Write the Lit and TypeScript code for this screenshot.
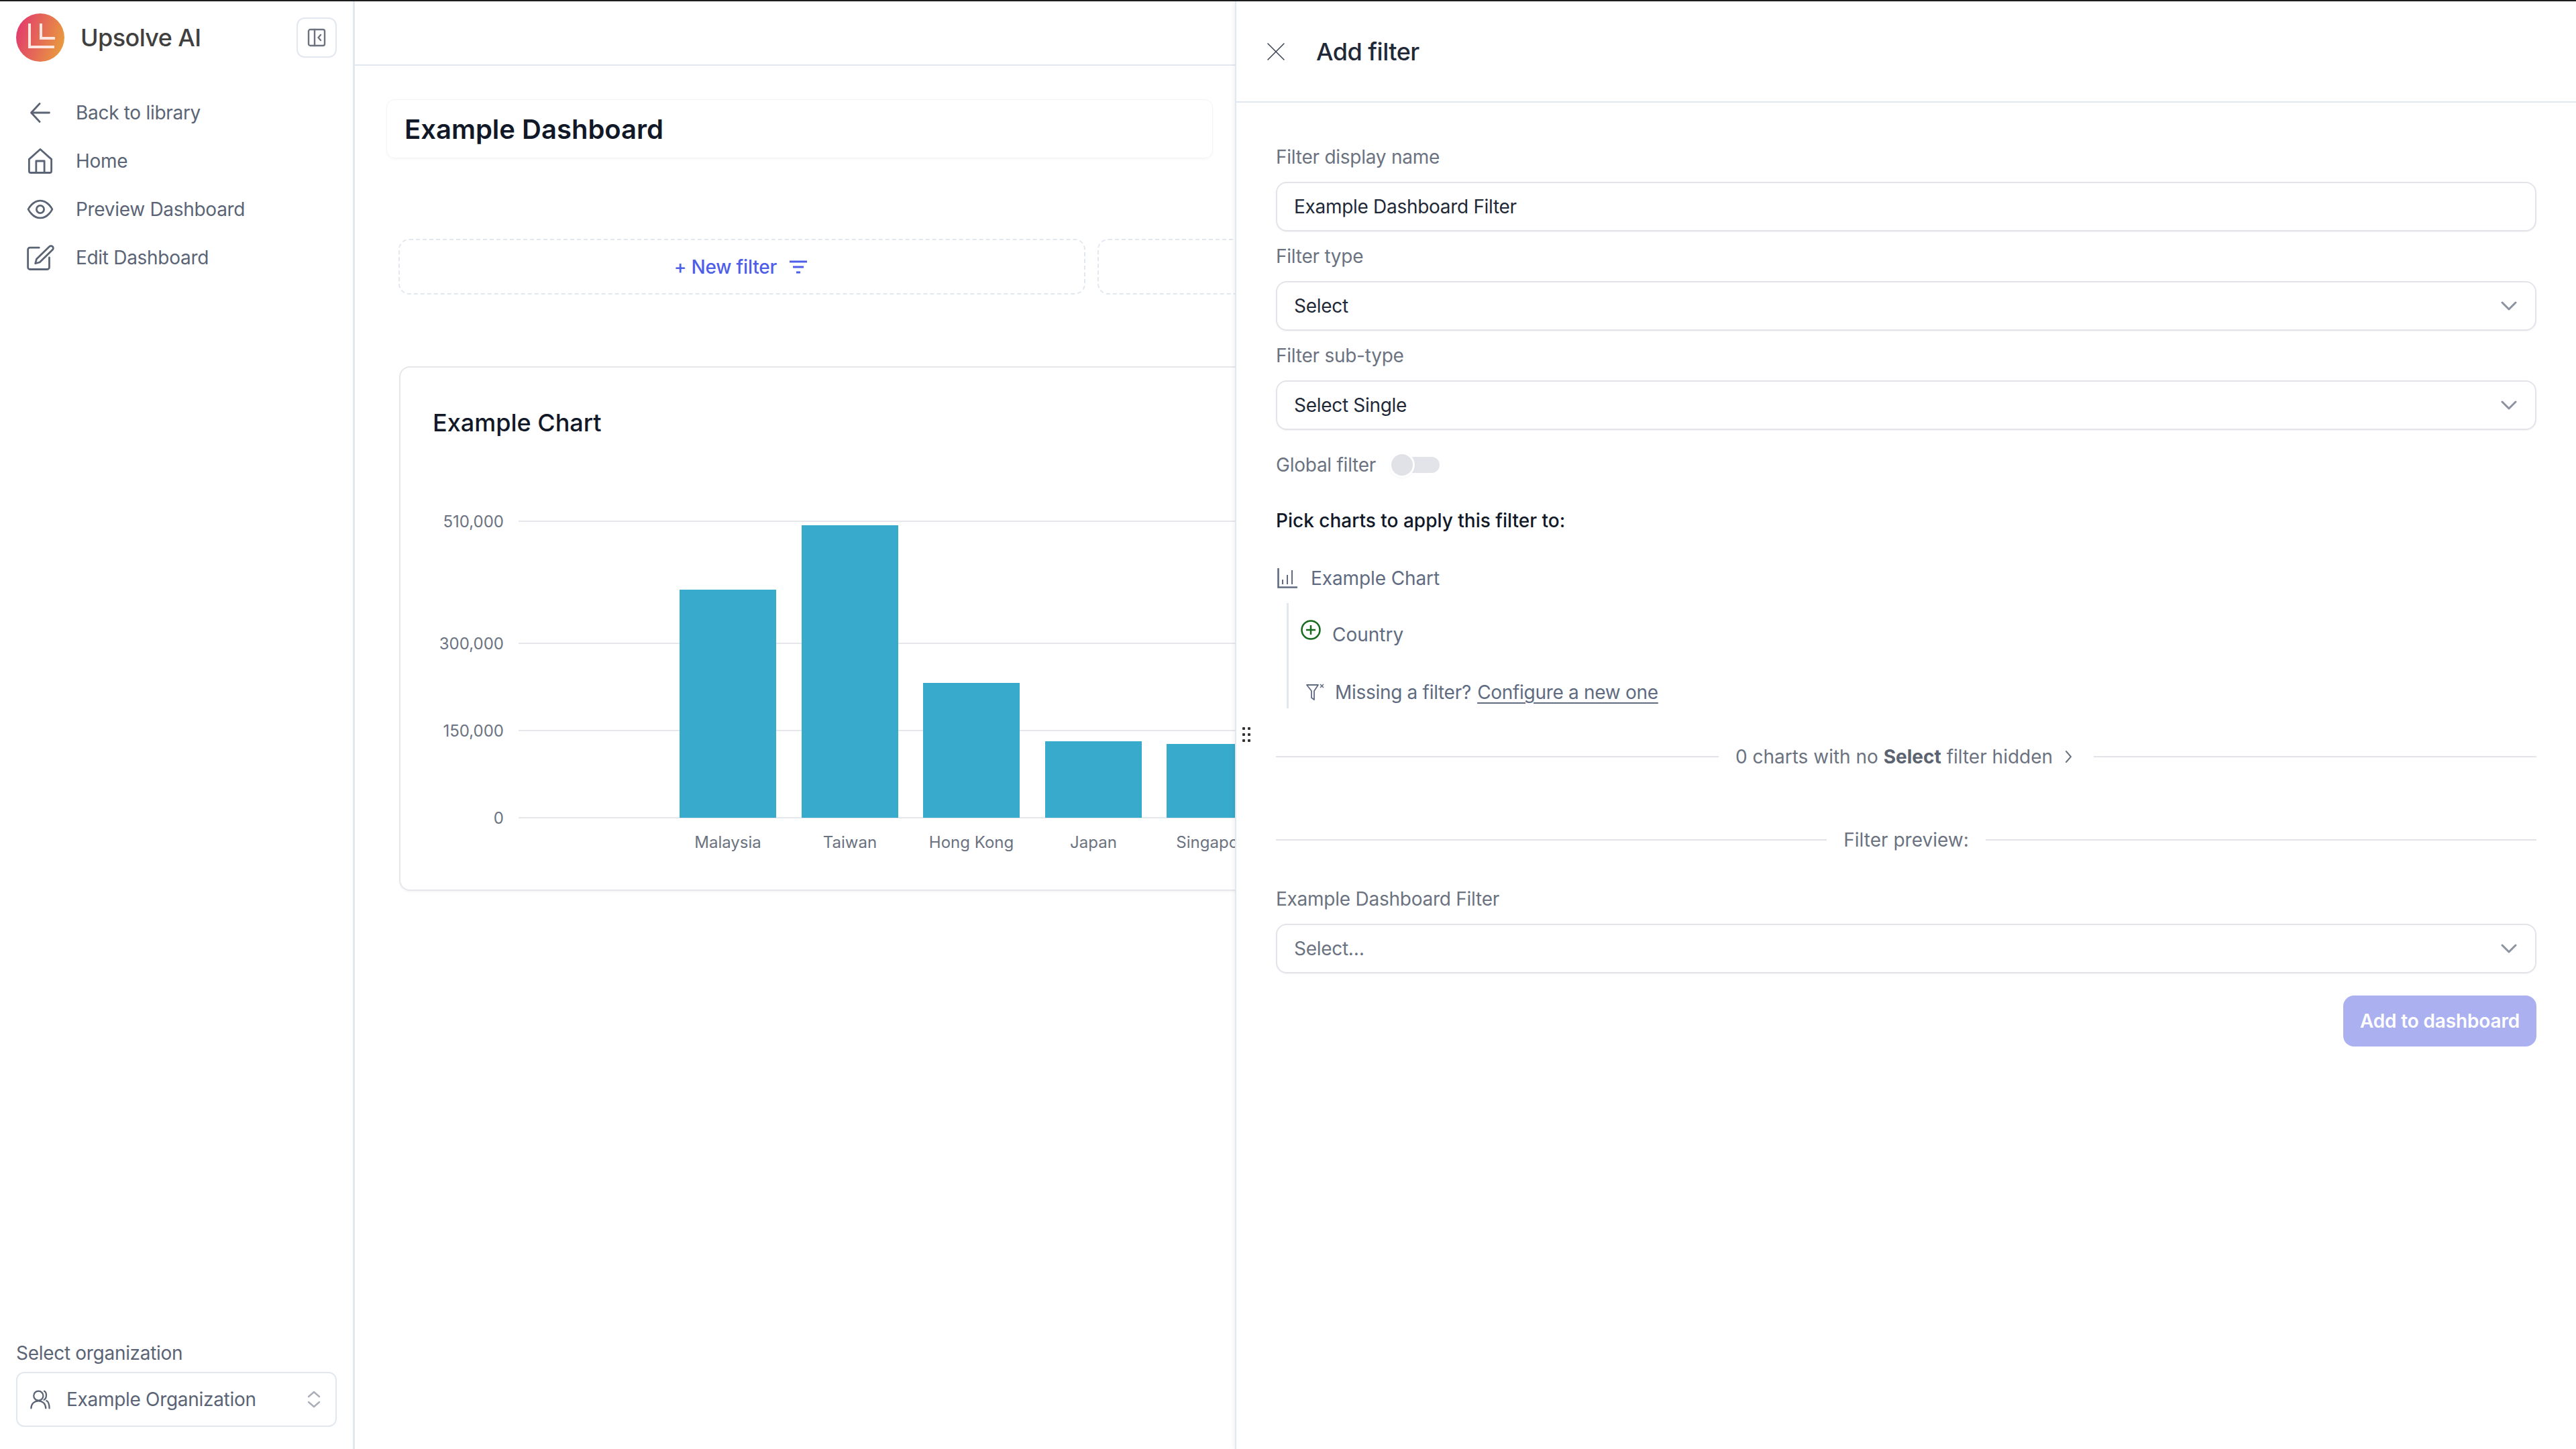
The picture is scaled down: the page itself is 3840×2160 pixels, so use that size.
import { LitElement, html, css, svg } from "lit";
import { customElement } from "lit/decorators.js";

const ic = (size: number, body: unknown, sw = 1.6) => html`<svg class="ic" width=${size} height=${size} viewBox="0 0 24 24" fill="none" stroke="currentColor" stroke-width=${sw} stroke-linecap="round" stroke-linejoin="round">${body}</svg>`;

const chevDown = html`<svg class="chev" width="24" height="14" viewBox="0 0 24 14" fill="none" stroke="currentColor" stroke-width="3" stroke-linecap="round" stroke-linejoin="round"><path d="M2 2l10 10L22 2"/></svg>`;

const BARS = [
  { name: "Malaysia", x: 1013, top: 879 },
  { name: "Taiwan", x: 1195, top: 783 },
  { name: "Hong Kong", x: 1376, top: 1018 },
  { name: "Japan", x: 1558, top: 1105 },
  { name: "Singapore", x: 1739, top: 1109 },
];
const TICKS = [
  { label: "510,000", y: 777 },
  { label: "300,000", y: 959 },
  { label: "150,000", y: 1089 },
  { label: "0", y: 1219 },
];
const OX = 597, OY = 760;

@customElement("app-root")
export class AppRoot extends LitElement {
  static styles = css`
    :host { display: block; font-family: Inter, "Liberation Sans", sans-serif; }
    * { box-sizing: border-box; }
    .root { position: relative; display: flex; width: 3840px; height: 2160px; overflow: hidden; background: #fff; border-top: 2px solid #1c1c1c; }
    .ic { flex: none; display: block; }

    .side { flex: none; width: 529px; display: flex; flex-direction: column; border-right: 3px solid #e2e8f0; padding: 18px 24px 33px 24px; }
    .brand { display: flex; align-items: center; }
    .logo { flex: none; display: block; }
    .brand-name { margin-left: 24px; flex: 1; font-size: 36px; line-height: 44px; font-weight: 500; color: #404040; letter-spacing: -0.6px; }
    .collapse { flex: none; width: 60px; height: 60px; border: 2px solid #e2e8f0; border-radius: 12px; display: flex; align-items: center; justify-content: center; color: #6b7280; }
    .nav { margin-top: 40px; display: flex; flex-direction: column; }
    .nav-item { height: 72px; display: flex; align-items: center; gap: 32px; padding-left: 15px; font-size: 28px; color: #5b6475; letter-spacing: -0.3px; }
    .foot { margin-top: auto; display: flex; flex-direction: column; gap: 10px; }
    .foot-label { font-size: 28px; line-height: 36px; color: #5b6475; letter-spacing: -0.3px; }
    .org { height: 82px; border: 2px solid #e2e8f0; border-radius: 12px; display: flex; align-items: center; padding: 0 22px 0 18px; font-size: 28px; color: #5b6475; letter-spacing: -0.3px; }
    .org-name { flex: 1; margin-left: 23px; }
    .updown { color: #a9aeb9; }

    .main { flex: 1; min-width: 0; display: flex; flex-direction: column; overflow: hidden; }
    .topbar { flex: none; height: 96px; border-bottom: 2px solid #e2e8f0; }
    .dash-title { flex: none; margin: 50px 0 0 47px; width: 1232px; height: 88px; border: 1px solid #f3f4f6; border-radius: 12px; box-shadow: 0 2px 3px rgba(0,0,0,.03); display: flex; align-items: center; padding-left: 26px; font-size: 40px; font-weight: 600; color: #111827; }
    .filters { flex: none; margin: 120px 0 0 65px; display: flex; gap: 18px; }
    .filter-slot { flex: none; width: 1024px; height: 83px; border: 2px dashed #e2e8f0; border-radius: 16px; display: flex; align-items: center; justify-content: center; gap: 19px; padding-right: 4px; color: #4f5ee8; font-size: 28px; font-weight: 500; letter-spacing: -0.2px; }
    .chart-card { flex: none; margin: 107px 0 0 66px; width: 2200px; height: 782px; border: 2px solid #e5e7eb; border-radius: 16px; box-shadow: 0 2px 3px rgba(0,0,0,.04); padding-top: 60px; overflow: hidden; }
    .chart-title { margin-left: 48px; font-size: 36px; line-height: 44px; font-weight: 500; color: #111827; }
    .chart { display: block; margin-top: 108px; }
    .grid-line { stroke: #e5e7eb; stroke-width: 2; }
    .bar { fill: #38aacb; }
    .axis { font-size: 24px; fill: #6b7280; font-family: Inter, "Liberation Sans", sans-serif; }

    .panel { position: absolute; left: 1841px; top: 0; bottom: 0; width: 1999px; background: #fff; border-left: 2px solid #e2e8f0; box-shadow: -2px 0 6px rgba(0,0,0,.06); display: flex; flex-direction: column; }
    .handle { position: absolute; left: 9px; top: 1082px; color: #333; }
    .panel-head { flex: none; height: 151px; border-bottom: 2px solid #e2e8f0; display: flex; align-items: center; padding-left: 46px; gap: 47px; font-size: 36px; font-weight: 500; color: #1f2937; letter-spacing: -0.5px; }
    .x { color: #374151; }
    .form { flex: 1; display: flex; flex-direction: column; padding: 63px 59px 0 59px; }
    .field { display: flex; flex-direction: column; gap: 19px; }
    .field + .field { margin-top: 19px; }
    .label { font-size: 28px; line-height: 36px; color: #6b7280; letter-spacing: -0.25px; }
    .box { height: 74px; border: 2px solid #e3e4ea; border-radius: 16px; box-shadow: 0 1px 2px rgba(0,0,0,.05); display: flex; align-items: center; justify-content: space-between; padding: 0 27px 0 25px; font-size: 28px; color: #1f2937; letter-spacing: -0.3px; }
    .box.ph { color: #6b7280; }
    .chev { color: #8b92a0; flex: none; }
    .global { margin-top: 34px; height: 36px; display: flex; align-items: center; gap: 23px; }
    .toggle { position: relative; width: 72px; height: 36px; display: flex; align-items: center; }
    .track { margin-left: 16px; width: 56px; height: 24px; border-radius: 12px; background: #e2e4ea; }
    .knob { position: absolute; left: 0; top: 2px; width: 32px; height: 32px; border-radius: 50%; background: #e0e2e8; box-shadow: 0 0 0 3px #fff, 0 1px 3px 3px rgba(0,0,0,.04); }
    .pick { margin-top: 47px; font-size: 28px; line-height: 36px; font-weight: 500; color: #111827; }
    .slate { color: #5f6b80; }
    .chart-row { margin: 50px 0 0 2px; height: 36px; display: flex; align-items: center; gap: 20px; font-size: 28px; letter-spacing: -0.1px; }
    .tree { margin: 19px 0 0 16px; height: 157px; border-left: 3px solid #e2e8f0; padding-left: 18px; display: flex; flex-direction: column; font-size: 28px; }
    .t-row { display: flex; align-items: center; }
    .country { margin-top: 25px; height: 44px; gap: 17px; }
    .country svg { color: #166c1d; margin-top: -15px; }
    .missing { margin-top: 42px; height: 44px; gap: 15px; padding-left: 8px; letter-spacing: -0.3px; }
    .missing a { color: inherit; text-decoration: underline; text-underline-offset: 5px; margin-left: .33em; }
    .divider { display: flex; align-items: center; gap: 25px; height: 36px; font-size: 28px; color: #6b7280; white-space: nowrap; }
    .divider::before, .divider::after { content: ""; flex: 1; height: 2px; background: #e3e4ea; }
    .divider b { font-weight: 700; color: #5b6270; }
    .d1 { margin-top: 54px; }
    .d1-block { display: flex; align-items: center; gap: 18px; margin-right: 8px; }
    .d2 { margin-top: 88px; }
    .preview { margin-top: 52px; }
    .submit { margin-top: 33px; align-self: flex-end; width: 288px; height: 76px; border-radius: 16px; background: #aab0f0; color: #fff; font-size: 28px; font-weight: 600; letter-spacing: -0.15px; display: flex; align-items: center; justify-content: center; }
  `;

  render() {
    return html`<div class="root">
      <aside class="side">
        <div class="brand">
          <svg class="logo" width="72" height="72" viewBox="0 0 72 72">
            <defs><linearGradient id="lg" x1="0" y1=".35" x2="1" y2=".65"><stop offset="0" stop-color="#e23c6c"/><stop offset="1" stop-color="#e89c3e"/></linearGradient></defs>
            <circle cx="36" cy="36" r="36" fill="url(#lg)"/>
            <path d="M20 15V50H57M37 15V37H58" fill="none" stroke="#fde7e0" stroke-width="4"/>
          </svg>
          <div class="brand-name">Upsolve AI</div>
          <div class="collapse">
            <svg width="28" height="28" viewBox="0 0 28 28" fill="none" stroke="currentColor" stroke-width="2.4" stroke-linejoin="round" stroke-linecap="round"><rect x="2" y="2" width="24" height="24" rx="2.5"/><path d="M11 2v24M20 10l-3.5 4 3.5 4"/></svg>
          </div>
        </div>
        <nav class="nav">
          <div class="nav-item">${ic(42, svg`<path d="M11.500 19.700 4.300 12l7.200-7.700M4.500 12h15.200"/>`)}Back to library</div>
          <div class="nav-item">${ic(42, svg`<path d="M2.500 10.500 12 2l9.500 8.500v10a1.500 1.500 0 0 1-1.500 1.500H4a1.500 1.500 0 0 1-1.500-1.500ZM8.500 22V12h7v10"/>`)}Home</div>
          <div class="nav-item">${ic(42, svg`<path d="M1.800 12S5.300 4.600 12 4.600 22.200 12 22.200 12 18.700 19.400 12 19.400 1.800 12 1.800 12Z"/><circle cx="12" cy="12" r="3.200"/>`)}Preview Dashboard</div>
          <div class="nav-item">${ic(42, svg`<path d="M11 3.500H3.200A1.700 1.700 0 0 0 1.500 5.200v15.100A1.700 1.700 0 0 0 3.200 22H18a1.700 1.700 0 0 0 1.700-1.700V12"/><path d="M19.800 2.600a1.900 1.900 0 0 1 2.700 2.700L11.500 16l-3.700 1 1-3.700Z"/>`)}Edit Dashboard</div>
        </nav>
        <div class="foot">
          <div class="foot-label">Select organization</div>
          <div class="org">
            ${ic(32, svg`<circle cx="10" cy="8" r="5.300"/><path d="M1.800 22c0-5 3.700-8.300 8.200-8.300S18.200 17 18.200 22M16.500 2.800c3 1.400 3 8-.3 9.700M19 13.500c2 1 3.200 4.500 3.200 8.500"/>`, 1.7)}
            <span class="org-name">Example Organization</span>
            <svg class="updown" width="20" height="26" viewBox="0 0 20 26" fill="none" stroke="currentColor" stroke-width="2.400" stroke-linecap="round" stroke-linejoin="round"><path d="M2 9l8-7 8 7M2 17l8 7 8-7"/></svg>
          </div>
        </div>
      </aside>

      <main class="main">
        <div class="topbar"></div>
        <div class="dash-title">Example Dashboard</div>
        <div class="filters">
          <div class="filter-slot">
            <span>+ New filter</span>
            <svg width="26" height="22" viewBox="0 0 26 22" fill="none" stroke="currentColor" stroke-width="3"><path d="M0 3h26M5 11h16M10 19h6"/></svg>
          </div>
          <div class="filter-slot"></div>
        </div>
        <section class="chart-card">
          <div class="chart-title">Example Chart</div>
          <svg class="chart" width="1400" height="520">
            ${TICKS.map((t) => svg`
              <line class="grid-line" x1=${773 - OX} x2="1400" y1=${t.y - OY} y2=${t.y - OY}></line>
              <text class="axis" x=${751 - OX} y=${t.y - OY + 9} text-anchor="end">${t.label}</text>`)}
            ${BARS.map((b) => svg`
              <rect class="bar" x=${b.x - OX} y=${b.top - OY} width="144" height=${1219 - b.top}></rect>
              <text class="axis" x=${b.x - OX + 72} y=${1264 - OY} text-anchor="middle">${b.name}</text>`)}
          </svg>
        </section>
      </main>

      <aside class="panel">
        <svg class="handle" width="12" height="22" viewBox="0 0 12 22" fill="currentColor"><rect x="0" y="0" width="4" height="4" rx="1"/><rect x="8" y="0" width="4" height="4" rx="1"/><rect x="0" y="9" width="4" height="4" rx="1"/><rect x="8" y="9" width="4" height="4" rx="1"/><rect x="0" y="18" width="4" height="4" rx="1"/><rect x="8" y="18" width="4" height="4" rx="1"/></svg>
        <header class="panel-head">
          <svg class="x" width="26" height="26" viewBox="0 0 26 26" fill="none" stroke="currentColor" stroke-width="1.5" stroke-linecap="round"><path d="M1 1l24 24M25 1 1 25"/></svg>
          <span>Add filter</span>
        </header>
        <div class="form">
          <div class="field"><div class="label">Filter display name</div><div class="box">Example Dashboard Filter</div></div>
          <div class="field"><div class="label">Filter type</div><div class="box">Select ${chevDown}</div></div>
          <div class="field"><div class="label">Filter sub-type</div><div class="box">Select Single ${chevDown}</div></div>
          <div class="global"><span class="label">Global filter</span>
            <div class="toggle"><div class="track"></div><div class="knob"></div></div>
          </div>
          <div class="pick">Pick charts to apply this filter to:</div>
          <div class="chart-row slate">
            <svg width="30" height="30" viewBox="0 0 30 30" fill="none" stroke="currentColor" stroke-width="2"><path d="M1.500 0v28.500H30" stroke-width="2.600"/><path d="M8 24v-7M15 24V10M22 24V3"/></svg>
            Example Chart
          </div>
          <div class="tree slate">
            <div class="t-row country">
              <svg width="30" height="30" viewBox="0 0 30 30" fill="none" stroke="currentColor" stroke-width="2.500"><circle cx="15" cy="15" r="13.500"/><path d="M15 8v14M8 15h14"/></svg>
              Country
            </div>
            <div class="t-row missing">
              <svg width="28" height="28" viewBox="0 0 28 28" fill="none" stroke="currentColor" stroke-width="1.800" stroke-linejoin="round"><path d="M1 3h17l-6 9v13l-4-3V12Z"/><path d="M21 2l5 5M26 2l-5 5" stroke-width="1.500"/></svg>
              <span>Missing a filter?<a>Configure a new one</a></span>
            </div>
          </div>
          <div class="divider d1"><div class="d1-block"><span>0 charts with no <b>Select</b> filter hidden</span>
            <svg width="10" height="20" viewBox="0 0 10 20" fill="none" stroke="currentColor" stroke-width="2" stroke-linecap="round" stroke-linejoin="round"><path d="M2 2l7 8-7 8"/></svg></div></div>
          <div class="divider d2"><span>Filter preview:</span></div>
          <div class="field preview"><div class="label">Example Dashboard Filter</div><div class="box ph">Select… ${chevDown}</div></div>
          <div class="submit">Add to dashboard</div>
        </div>
      </aside>
    </div>`;
  }
}
